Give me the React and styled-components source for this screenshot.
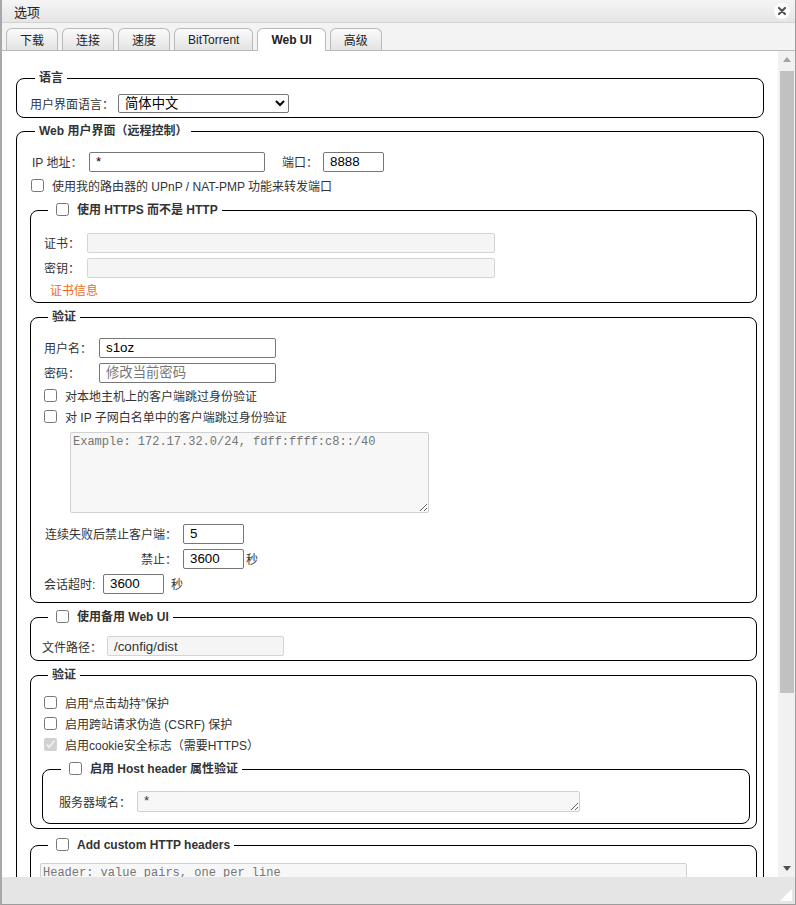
import React from 'react';
import styled, { createGlobalStyle } from 'styled-components';

const GlobalStyle = createGlobalStyle`
    html, body {
        margin: 0;
        padding: 0;
        background: #fff;
    }
    body {
        font-family: "Liberation Sans", "Noto Sans CJK SC", sans-serif;
        font-size: 12px;
        color: #333;
    }
`;

const Window = styled.div`
    width: 796px;
    height: 905px;
    box-sizing: border-box;
    display: flex;
    flex-direction: column;
    border-left: 2px solid #a8a8a8;
    border-right: 1px solid #9c9c9c;
    border-bottom: 1px solid #9c9c9c;
    background: #fff;
    overflow: hidden;
`;

const TitleBar = styled.div`
    flex: none;
    height: 23px;
    box-sizing: border-box;
    display: flex;
    align-items: center;
    justify-content: space-between;
    padding: 0 5px 0 12px;
    background: linear-gradient(#f5f5f5, #e5e5e5);
    border-bottom: 1px solid #d2d2d2;
    font-size: 13px;
    color: #222;
`;

const CloseButton = styled.div`
    width: 16px;
    height: 16px;
    border-radius: 50%;
    background: #fff;
    display: flex;
    align-items: center;
    justify-content: center;
`;

const TabBar = styled.div`
    flex: none;
    height: 28px;
    box-sizing: border-box;
    display: flex;
    align-items: flex-end;
    gap: 4px;
    padding-left: 4px;
    background: #f3f3f3;
    border-bottom: 1px solid #b9b9b9;
`;

const Tab = styled.div`
    height: ${p => (p.$active ? 23 : 22)}px;
    margin-bottom: ${p => (p.$active ? -1 : 0)}px;
    box-sizing: border-box;
    padding: 0 13px;
    display: flex;
    align-items: center;
    border: 1px solid #b9b9b9;
    border-bottom: none;
    border-radius: 6px 6px 0 0;
    background: ${p => (p.$active ? '#fff' : 'linear-gradient(#fbfbfb, #e3e3e3)')};
    font-weight: ${p => (p.$active ? 'bold' : 'normal')};
    color: #222;
`;

const Body = styled.div`
    flex: 1;
    min-height: 0;
    display: flex;
`;

const Content = styled.div`
    flex: 1;
    min-width: 0;
    overflow: hidden;
    padding: 19px 14px 0 14px;
`;

const ScrollBar = styled.div`
    flex: none;
    width: 17px;
    display: flex;
    flex-direction: column;
    background: #f1f1f1;
`;

const ScrollArrow = styled.div`
    flex: none;
    height: 17px;
    display: flex;
    align-items: center;
    justify-content: center;
`;

const ScrollTrack = styled.div`
    flex: 1;
    padding: 3px 1px 0 2px;
`;

const ScrollThumb = styled.div`
    height: 622px;
    background: #c1c1c1;
`;

const Footer = styled.div`
    flex: none;
    height: 24px;
    display: flex;
    justify-content: flex-end;
    align-items: flex-end;
    padding: 0 3px 3px 0;
    background: #e5e5e5;
`;

const Group = styled.fieldset`
    border: 1px solid #000;
    border-radius: 8px;
    margin: ${p => p.$mt || 0}px 0 ${p => p.$mb ?? 6}px ${p => p.$ml || 0}px;
    padding: ${p => p.$pad};
    min-width: 0;
`;

const Legend = styled.legend`
    margin-left: ${p => p.$ml ?? 4}px;
    padding: 0 4px;
    line-height: 16px;
    font-weight: bold;
    color: #333;
`;

const LegendCheck = styled.input`
    width: 13px;
    height: 13px;
    margin: 0 8px 0 4px;
    vertical-align: -2px;
`;

const Row = styled.div`
    display: flex;
    align-items: center;
    height: ${p => p.$h || 22}px;
    margin-top: ${p => p.$mt || 0}px;
    padding-left: ${p => p.$indent || 0}px;
`;

const Label = styled.label`
    flex: none;
    box-sizing: border-box;
    width: ${p => (p.$w ? `${p.$w}px` : 'auto')};
    padding-left: ${p => p.$pl || 0}px;
    margin-left: ${p => p.$ml || 0}px;
    text-align: ${p => (p.$right ? 'right' : 'left')};
    color: #333;
    white-space: nowrap;
`;

const Check = styled.input`
    flex: none;
    width: 13px;
    height: 13px;
    margin: 0 8px 0 ${p => p.$ml || 0}px;
`;

const TextInput = styled.input`
    flex: none;
    box-sizing: border-box;
    width: ${p => p.$w}px;
    height: 20px;
    margin-left: ${p => p.$ml || 0}px;
    padding: 1px 6px;
    border: 1px solid #767676;
    border-radius: 2px;
    background: #fff;
    font: 13.33px "Liberation Sans", "Noto Sans CJK SC", sans-serif;
    color: #000;
    outline: none;
    &:disabled {
        background: #f5f5f5;
        border-color: #d4d4d4;
        color: #333;
    }
    &::placeholder {
        color: #777;
    }
`;

const Select = styled.select`
    box-sizing: border-box;
    width: 171px;
    height: 19px;
    margin-left: 4px;
    border: 1px solid #767676;
    border-radius: 2px;
    padding: 0 2px;
    background: #fff;
    font: 13.33px "Liberation Sans", "Noto Sans CJK SC", sans-serif;
    color: #000;
`;

const Area = styled.textarea`
    display: block;
    box-sizing: border-box;
    width: ${p => p.$w}px;
    height: ${p => p.$h}px;
    margin: ${p => p.$mt || 0}px 0 0 ${p => p.$ml || 0}px;
    padding: ${p => p.$pad || '2px'};
    border: 1px solid #d0d0d0;
    border-radius: 2px;
    background: #f7f7f7;
    font: ${p => (p.$mono ? '12px "Liberation Mono", monospace' : '13.33px "Liberation Sans", "Noto Sans CJK SC", sans-serif')};
    color: #333;
    &::placeholder {
        color: #757575;
    }
`;

const Link = styled.span`
    color: #ef6a24;
`;

const Unit = styled.span`
    margin-left: ${p => p.$ml || 2}px;
    color: #333;
`;

const tabs = ['下载', '连接', '速度', 'BitTorrent', 'Web UI', '高级'];

const CheckRow = ({ children, checked, disabled, ml }) => (
    <Row $h={21}>
        <Check type="checkbox" $ml={ml} defaultChecked={checked} disabled={disabled} />
        <Label>{children}</Label>
    </Row>
);

const App = () => {
    return (
        <>
            <GlobalStyle />
            <Window>
                <TitleBar>
                    <span>选项</span>
                    <CloseButton>
                        <svg width="10" height="10" viewBox="0 0 10 10">
                            <path d="M2 2 L8 8 M8 2 L2 8" stroke="#555" strokeWidth="2.2" strokeLinecap="round" />
                        </svg>
                    </CloseButton>
                </TitleBar>
                <TabBar>
                    {tabs.map(t => (
                        <Tab key={t} $active={t === 'Web UI'}>{t}</Tab>
                    ))}
                </TabBar>
                <Body>
                    <Content>
                        <Group $pad="7px 6px 3px 13px" $mb={5}>
                            <Legend $ml={5}>语言</Legend>
                            <Row $h={21}>
                                <Label>用户界面语言：</Label>
                                <Select defaultValue="zh">
                                    <option value="zh">简体中文</option>
                                </Select>
                            </Row>
                        </Group>

                        <Group $pad="0 6px 0 13px" $mb={0}>
                            <Legend $ml={5}>Web 用户界面（远程控制）</Legend>
                            <Row $mt={11} $h={23}>
                                <Label $w={59} $pl={2}>IP 地址：</Label>
                                <TextInput $w={176} defaultValue="*" />
                                <Label $w={41} $ml={17}>端口：</Label>
                                <TextInput $w={61} defaultValue="8888" />
                            </Row>
                            <Row $h={24}>
                                <Check type="checkbox" $ml={1} />
                                <Label>使用我的路由器的 UPnP / NAT-PMP 功能来转发端口</Label>
                            </Row>

                            <Group $mt={5} $pad="12px 6px 4px 13px">
                                <Legend>
                                    <LegendCheck type="checkbox" />
                                    使用 HTTPS 而不是 HTTP
                                </Legend>
                                <Row $h={25}>
                                    <Label $w={43}>证书：</Label>
                                    <TextInput $w={408} disabled />
                                </Row>
                                <Row $h={25}>
                                    <Label $w={43}>密钥：</Label>
                                    <TextInput $w={408} disabled />
                                </Row>
                                <Row $h={18} $indent={6}>
                                    <Link>证书信息</Link>
                                </Row>
                            </Group>

                            <Group $pad="10px 6px 6px 13px">
                                <Legend>验证</Legend>
                                <Row $h={25}>
                                    <Label $w={55}>用户名：</Label>
                                    <TextInput $w={177} defaultValue="s1oz" />
                                </Row>
                                <Row $h={25}>
                                    <Label $w={55}>密码：</Label>
                                    <TextInput $w={177} type="password" placeholder="修改当前密码" />
                                </Row>
                                <CheckRow>对本地主机上的客户端跳过身份验证</CheckRow>
                                <CheckRow>对 IP 子网白名单中的客户端跳过身份验证</CheckRow>
                                <Area
                                    $mono
                                    $w={359}
                                    $h={81}
                                    $mt={5}
                                    $ml={26}
                                    disabled
                                    placeholder="Example: 172.17.32.0/24, fdff:ffff:c8::/40"
                                />
                                <Row $h={25} $mt={8}>
                                    <Label $w={133} $right>连续失败后禁止客户端：</Label>
                                    <TextInput $w={61} $ml={6} defaultValue="5" />
                                </Row>
                                <Row $h={25}>
                                    <Label $w={133} $right>禁止：</Label>
                                    <TextInput $w={61} $ml={6} defaultValue="3600" />
                                    <Unit>秒</Unit>
                                </Row>
                                <Row $h={25}>
                                    <Label $w={59}>会话超时:</Label>
                                    <TextInput $w={61} defaultValue="3600" />
                                    <Unit $ml={7}>秒</Unit>
                                </Row>
                            </Group>

                            <Group $pad="10px 6px 3px 13px">
                                <Legend>
                                    <LegendCheck type="checkbox" />
                                    使用备用 Web UI
                                </Legend>
                                <Row $h={22}>
                                    <Label $w={65} $ml={-2}>文件路径：</Label>
                                    <TextInput $w={177} disabled defaultValue="/config/dist" />
                                </Row>
                            </Group>

                            <Group $pad="9px 6px 4px 13px" $mb={8}>
                                <Legend>验证</Legend>
                                <CheckRow>启用“点击劫持”保护</CheckRow>
                                <CheckRow>启用跨站请求伪造 (CSRF) 保护</CheckRow>
                                <CheckRow checked disabled>启用cookie安全标志（需要HTTPS）</CheckRow>
                                <Group $mt={6} $ml={-2} $mb={0} $pad="13px 6px 11px 16px">
                                    <Legend $ml={2}>
                                        <LegendCheck type="checkbox" />
                                        启用 Host header 属性验证
                                    </Legend>
                                    <Row $h={22}>
                                        <Label $w={78}>服务器域名：</Label>
                                        <Area $w={443} $h={21} $pad="1px 6px" disabled defaultValue="*" />
                                    </Row>
                                </Group>
                            </Group>

                            <Group $pad="10px 6px 40px 13px" $mb={0}>
                                <Legend>
                                    <LegendCheck type="checkbox" />
                                    Add custom HTTP headers
                                </Legend>
                                <Area
                                    $mono
                                    $w={647}
                                    $h={80}
                                    $ml={-4}
                                    disabled
                                    placeholder="Header: value pairs, one per line"
                                />
                            </Group>
                        </Group>
                    </Content>
                    <ScrollBar>
                        <ScrollArrow>
                            <svg width="8" height="5" viewBox="0 0 8 5">
                                <path d="M0 5 L4 0 L8 5 Z" fill="#a3a3a3" />
                            </svg>
                        </ScrollArrow>
                        <ScrollTrack>
                            <ScrollThumb />
                        </ScrollTrack>
                        <ScrollArrow>
                            <svg width="8" height="5" viewBox="0 0 8 5">
                                <path d="M0 0 L8 0 L4 5 Z" fill="#505050" />
                            </svg>
                        </ScrollArrow>
                    </ScrollBar>
                </Body>
                <Footer>
                    <svg width="12" height="12" viewBox="0 0 12 12">
                        <path d="M12 0 L12 12 L0 12 Z" fill="#fff" />
                    </svg>
                </Footer>
            </Window>
        </>
    );
};

export default App;
